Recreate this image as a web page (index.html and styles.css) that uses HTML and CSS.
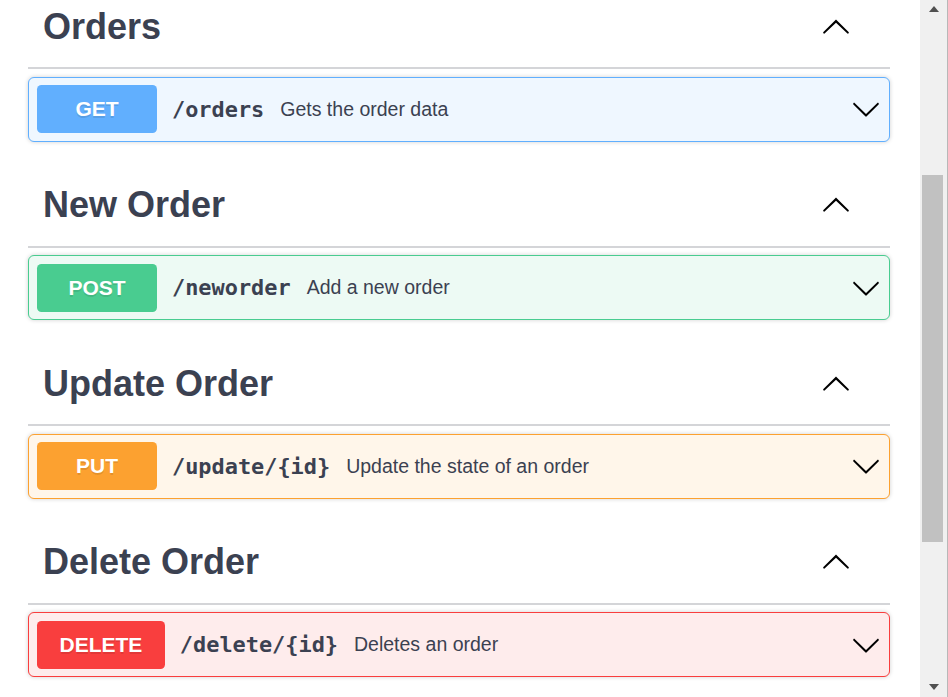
FILE: index.html
```html
<!DOCTYPE html>
<html lang="en">
<head>
<meta charset="utf-8">
<title>Orders API</title>
<link rel="stylesheet" href="styles.css">
</head>
<body>
<div class="window">
  <main class="viewport">
    <div class="content">
      <section class="tag-section">
        <h3 class="tag">
          <span class="tag-name">Orders</span>
          <svg class="chev" viewBox="0 0 20 20"><path d="M17.418 14.908c.272.268.709.268.979 0s.271-.701 0-.969l-7.908-7.83c-.27-.268-.707-.268-.979 0l-7.908 7.830c-.27.268-.27.701 0 .969.271.268.709.268.979 0L10 7.767l7.418 7.141z"/></svg>
        </h3>
        <div class="opblock get">
          <span class="method">GET</span>
          <span class="path">/orders</span>
          <span class="desc">Gets the order data</span>
          <svg class="chev end" viewBox="0 0 20 20"><path d="M17.418 6.109c.272-.268.709-.268.979 0s.271.701 0 .969l-7.908 7.83c-.27.268-.707.268-.979 0l-7.908-7.83c-.27-.268-.27-.701 0-.969.271-.268.709-.268.979 0L10 13.25l7.418-7.141z"/></svg>
        </div>
      </section>
      <section class="tag-section">
        <h3 class="tag">
          <span class="tag-name">New Order</span>
          <svg class="chev" viewBox="0 0 20 20"><path d="M17.418 14.908c.272.268.709.268.979 0s.271-.701 0-.969l-7.908-7.83c-.27-.268-.707-.268-.979 0l-7.908 7.83c-.27.268-.27.701 0 .969.271.268.709.268.979 0L10 7.767l7.418 7.141z"/></svg>
        </h3>
        <div class="opblock post">
          <span class="method">POST</span>
          <span class="path">/neworder</span>
          <span class="desc">Add a new order</span>
          <svg class="chev end" viewBox="0 0 20 20"><path d="M17.418 6.109c.272-.268.709-.268.979 0s.271.701 0 .969l-7.908 7.83c-.27.268-.707.268-.979 0l-7.908-7.83c-.27-.268-.27-.701 0-.969.271-.268.709-.268.979 0L10 13.25l7.418-7.141z"/></svg>
        </div>
      </section>
      <section class="tag-section">
        <h3 class="tag">
          <span class="tag-name">Update Order</span>
          <svg class="chev" viewBox="0 0 20 20"><path d="M17.418 14.908c.272.268.709.268.979 0s.271-.701 0-.969l-7.908-7.83c-.27-.268-.707-.268-.979 0l-7.908 7.83c-.27.268-.27.701 0 .969.271.268.709.268.979 0L10 7.767l7.418 7.141z"/></svg>
        </h3>
        <div class="opblock put">
          <span class="method">PUT</span>
          <span class="path">/update/{id}</span>
          <span class="desc">Update the state of an order</span>
          <svg class="chev end" viewBox="0 0 20 20"><path d="M17.418 6.109c.272-.268.709-.268.979 0s.271.701 0 .969l-7.908 7.83c-.27.268-.707.268-.979 0l-7.908-7.83c-.27-.268-.27-.701 0-.969.271-.268.709-.268.979 0L10 13.25l7.418-7.141z"/></svg>
        </div>
      </section>
      <section class="tag-section">
        <h3 class="tag">
          <span class="tag-name">Delete Order</span>
          <svg class="chev" viewBox="0 0 20 20"><path d="M17.418 14.908c.272.268.709.268.979 0s.271-.701 0-.969l-7.908-7.83c-.27-.268-.707-.268-.979 0l-7.908 7.83c-.27.268-.27.701 0 .969.271.268.709.268.979 0L10 7.767l7.418 7.141z"/></svg>
        </h3>
        <div class="opblock delete">
          <span class="method">DELETE</span>
          <span class="path">/delete/{id}</span>
          <span class="desc">Deletes an order</span>
          <svg class="chev end" viewBox="0 0 20 20"><path d="M17.418 6.109c.272-.268.709-.268.979 0s.271.701 0 .969l-7.908 7.83c-.27.268-.707.268-.979 0l-7.908-7.83c-.27-.268-.27-.701 0-.969.271-.268.709-.268.979 0L10 13.25l7.418-7.141z"/></svg>
        </div>
      </section>
    </div>
  </main>
  <div class="scrollbar">
    <div class="sb-btn sb-up"><span class="tri-up"></span></div>
    <div class="sb-track"><div class="sb-thumb"></div></div>
    <div class="sb-btn sb-down"><span class="tri-down"></span></div>
  </div>
</div>
</body>
</html>
```
FILE: styles.css
```css
html, body {
  margin: 0;
  padding: 0;
  background: #ffffff;
}

.window {
  display: flex;
  width: 948px;
  height: 697px;
  overflow: hidden;
}

.viewport {
  flex: 1;
  height: 697px;
  overflow: hidden;
  background: #ffffff;
}

.content {
  margin-top: -13.5px;
  padding: 0 30px 0 28px;
}

.tag-section {
  display: flex;
  flex-direction: column;
}

.tag {
  display: flex;
  align-items: center;
  justify-content: space-between;
  box-sizing: border-box;
  height: 82.5px;
  margin: 0 0 7.5px;
  padding: 0 39px 0 15px;
  border-bottom: 2px solid #d4d5d8;
  font-family: "Liberation Sans", Arial, sans-serif;
  font-weight: 700;
  font-size: 36px;
  color: #3b4151;
}

.chev {
  width: 30px;
  height: 30px;
  flex: none;
  fill: #000000;
}

.tag .chev {
  margin-top: -2px;
}

.chev.end {
  margin-left: auto;
}

.opblock {
  display: flex;
  align-items: center;
  box-sizing: border-box;
  height: 65px;
  margin: 0 0 23.5px;
  padding: 0 8px;
  border: 1px solid;
  border-radius: 6px;
  box-shadow: 0 0 4.5px rgba(0, 0, 0, 0.19);
}

.method {
  box-sizing: border-box;
  min-width: 120px;
  height: 48px;
  line-height: 48px;
  padding: 0 22.5px;
  border-radius: 4.5px;
  text-align: center;
  font-family: "Liberation Sans", Arial, sans-serif;
  font-weight: 700;
  font-size: 21px;
  color: #ffffff;
  text-shadow: 0 1.5px 0 rgba(0, 0, 0, 0.1);
}

.path {
  padding: 0 16px 0 15px;
  font-family: "DejaVu Sans Mono", monospace;
  font-weight: 700;
  font-size: 21.9px;
  color: #3b4151;
}

.desc {
  font-family: "Liberation Sans", Arial, sans-serif;
  font-size: 19.5px;
  color: #3b4151;
}

.get { background: #eff7ff; border-color: #61affe; }
.get .method { background: #61affe; }
.post { background: #edfaf4; border-color: #49cc90; }
.post .method { background: #49cc90; }
.put { background: #fff6ea; border-color: #fca130; }
.put .method { background: #fca130; }
.delete { background: #feecec; border-color: #f93e3e; }
.delete .method { background: #f93e3e; }

.scrollbar {
  display: flex;
  flex-direction: column;
  width: 27px;
  height: 697px;
  background: #f0f0f0;
  border-right: 1px solid #b8b8b8;
  flex: none;
}

.sb-btn {
  display: flex;
  justify-content: center;
  height: 25px;
}

.sb-up {
  align-items: flex-start;
  padding-top: 6px;
  box-sizing: border-box;
}

.sb-down {
  align-items: flex-end;
  padding-bottom: 7px;
  box-sizing: border-box;
}

.tri-up {
  width: 0;
  height: 0;
  border-left: 5.5px solid transparent;
  border-right: 5.5px solid transparent;
  border-bottom: 6px solid #505050;
}

.tri-down {
  width: 0;
  height: 0;
  border-left: 5.5px solid transparent;
  border-right: 5.5px solid transparent;
  border-top: 6px solid #505050;
}

.sb-track {
  flex: 1;
  padding-top: 150px;
}

.sb-thumb {
  width: 21px;
  height: 367px;
  margin-left: 2px;
  background: #c1c1c1;
}
```
